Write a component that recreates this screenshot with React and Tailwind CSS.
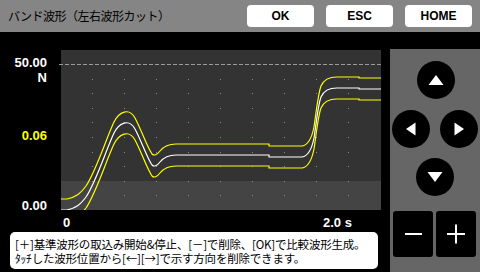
import React from "react";

const jp = { fontFamily: '"Noto Sans CJK JP", "Noto Sans", sans-serif' };
const num = { fontFamily: '"Liberation Sans", Arial, sans-serif' };

const gridX = [92, 124, 156, 188, 220, 252, 284, 316, 348];
const gridY = [79, 93, 108, 122, 137, 152, 166, 181, 195];

const wave =
  "M61 210 L67 210 C76 208 80 205 86 197 C96 182 106 150 114 133 C119 123 129 118 135 129 C141 140 147 158 152 165 C154 167 157 166 160 162 C164 157 168 155 176 155 L269 155 L269 157 L302 157 C309 156 312 148 314 138 C316 125 318 105 321 97 C324 90 329 88 337 88 L359 88 L359 89 L381 89";

function TopButton({ label }) {
  return (
    <button
      className="flex h-[22px] w-[67px] items-center justify-center rounded-[4px] bg-white text-[12px] font-bold text-black"
      style={num}
    >
      {label}
    </button>
  );
}

function Chart() {
  return (
    <div className="relative h-[160px] w-[320px] bg-[#333333]">
      <svg
        className="absolute inset-0 overflow-visible"
        width="320"
        height="160"
        viewBox="61 50 320 160"
      >
        <rect x="61" y="181" width="320" height="29" fill="#444444" />
        {gridY.map((y) =>
          gridX.map((x) => (
            <rect key={`${x}-${y}`} x={x} y={y} width="1" height="1" fill="#8a8a8a" />
          ))
        )}
        <line
          x1="59"
          y1="64.5"
          x2="381"
          y2="64.5"
          stroke="#9a9a9a"
          strokeWidth="1"
          strokeDasharray="4 2"
        />
        <clipPath id="plot">
          <rect x="61" y="50" width="320" height="160" />
        </clipPath>
        <g clipPath="url(#plot)" fill="none" strokeWidth="1.2">
          <path d={wave} stroke="#ffff00" transform="translate(0 -11)" />
          <path d={wave} stroke="#ffffff" />
          <path d={wave} stroke="#ffff00" transform="translate(0 11)" />
        </g>
      </svg>
    </div>
  );
}

function RoundKey({ dir }) {
  const shapes = {
    up: "M0 -5 L7.5 5 L-7.5 5 Z",
    down: "M0 5 L7.5 -5 L-7.5 -5 Z",
    left: "M-5 0 L4.5 -6.5 L4.5 6.5 Z",
    right: "M5 0 L-4.5 -6.5 L-4.5 6.5 Z",
  };
  return (
    <button className="flex h-[38px] w-[38px] items-center justify-center rounded-full bg-black">
      <svg width="20" height="20" viewBox="-10 -10 20 20">
        <path d={shapes[dir]} fill="#ffffff" />
      </svg>
    </button>
  );
}

export default function App() {
  return (
    <div className="flex h-[272px] w-[480px] flex-col overflow-hidden bg-black">
      <div className="flex h-[32px] shrink-0 items-center bg-[#858585] pl-[8px] pr-[8px]">
        <span className="text-[12px] leading-none tracking-[-0.5px] text-black" style={jp}>
          バンド波形（左右波形カット）
        </span>
        <div className="ml-auto flex gap-[12px]">
          <TopButton label="OK" />
          <TopButton label="ESC" />
          <TopButton label="HOME" />
        </div>
      </div>

      <div className="flex flex-1">
        <div className="flex w-[390px] flex-col pt-[18px]">
          <div className="flex">
            <div className="relative w-[61px] text-[13px] font-bold leading-[13px]" style={num}>
              <div className="absolute right-[14px] top-[6px] text-white">50.00</div>
              <div className="absolute right-[14px] top-[21px] text-white">N</div>
              <div className="absolute right-[14px] top-[79px] text-[#ffff00]">0.06</div>
              <div className="absolute right-[14px] top-[149px] text-white">0.00</div>
            </div>
            <Chart />
          </div>
          <div
            className="relative h-[22px] text-[13px] font-bold leading-[13px] text-white"
            style={num}
          >
            <span className="absolute left-[63px] top-[6px]">0</span>
            <span className="absolute left-[323px] top-[6px]">2.0 s</span>
          </div>
          <div
            className="ml-[10px] flex h-[37px] w-[368px] flex-col justify-center rounded-[5px] bg-white pl-[5px] text-[11.5px] leading-[14px] tracking-[-0.2px] text-black"
            style={jp}
          >
            <div>[＋]基準波形の取込み開始&amp;停止、[－]で削除、[OK]で比較波形生成。</div>
            <div>ﾀｯﾁした波形位置から[←][→]で示す方向を削除できます。</div>
          </div>
        </div>

        <div className="mt-[17px] flex w-[90px] flex-col bg-[#666666]">
          <div className="mt-[12px] flex justify-center pl-[2px]">
            <RoundKey dir="up" />
          </div>
          <div className="mt-[11px] flex justify-between px-[2px]">
            <RoundKey dir="left" />
            <RoundKey dir="right" />
          </div>
          <div className="mt-[10px] flex justify-center">
            <RoundKey dir="down" />
          </div>
          <div className="mt-[15px] flex gap-[3px] px-[3px]">
            <button className="flex h-[46px] w-[40px] items-center justify-center rounded-[3px] bg-black">
              <span className="block h-[2px] w-[17px] bg-white" />
            </button>
            <button className="flex h-[46px] w-[40px] items-center justify-center rounded-[3px] bg-black">
              <svg width="20" height="20" viewBox="0 0 20 20">
                <rect x="1" y="9" width="18" height="2" fill="#ffffff" />
                <rect x="9" y="0.5" width="2" height="19" fill="#ffffff" />
              </svg>
            </button>
          </div>
        </div>
      </div>
    </div>
  );
}
